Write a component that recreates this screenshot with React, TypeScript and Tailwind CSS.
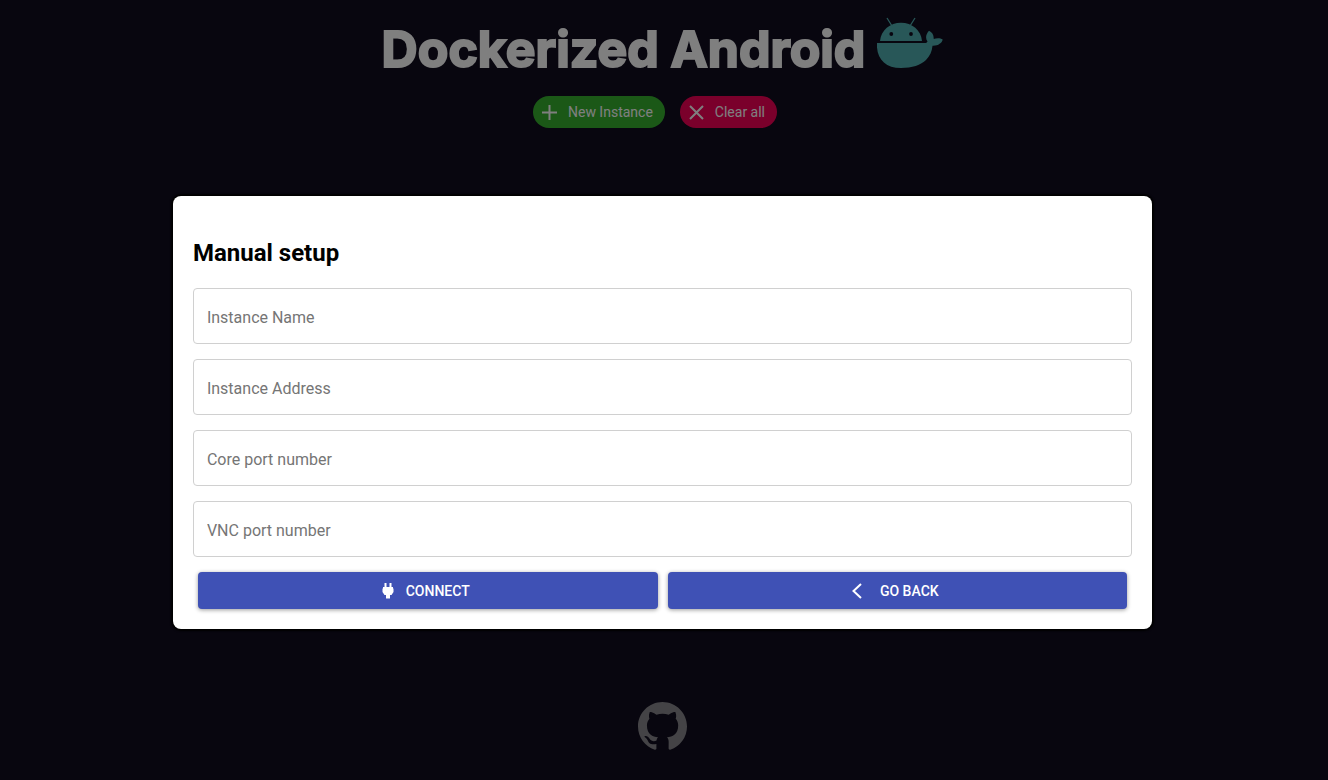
import { useState } from "react";

const fields = ["Instance Name", "Instance Address", "Core port number", "VNC port number"];

function Whale() {
  return (
    <svg viewBox="0 0 66 51" className="h-[51px] w-[66px]" fill="#50aeb0" aria-hidden="true">
      <path d="M3 24C4 13 13 5.700 24 5.700S44 13 45 24z" />
      <path d="M10 1l5 8M38 1l-5 8" stroke="#50aeb0" strokeWidth="1.300" />
      <circle cx="14.300" cy="17" r="1.900" fill="#100b1f" />
      <circle cx="34" cy="17" r="1.900" fill="#100b1f" />
      <path d="M0 26H47.500C49 26 50 25.500 50.500 24.500 48 21 49 17 52 13.700 55 15 57 18 56.700 22 59 21 63 20.500 65.700 22.500 65 26 61 29 55.500 28.700 55 34 53 39 49 43 44 48 35 51 24 51 8 51-1 41 0 26z" />
    </svg>
  );
}

export default function App() {
  const [values, setValues] = useState<Record<string, string>>({});
  return (
    <div className="relative flex min-h-screen flex-col bg-[#100c1e] pr-[3px] font-[Roboto,sans-serif]">
      <header className="flex flex-col items-center">
        <h1 className="flex items-start gap-3 pt-[17px] font-[Inter,sans-serif] text-[50px] leading-[65px] font-bold text-white">
          <span className="[-webkit-text-stroke:2px_white]">Dockerized Android</span>
          <Whale />
        </h1>
        <div className="mt-[14px] flex gap-[15px] pr-[15px] text-sm text-white">
          <button className="flex h-8 items-center rounded-full bg-[#36b12f] pr-3 pl-[9px]">
            <svg viewBox="0 0 15 15" className="mr-[11px] size-[15px]" stroke="white" strokeWidth="2" aria-hidden="true">
              <path d="M7.500 0v15M0 7.500h15" />
            </svg>
            New Instance
          </button>
          <button className="flex h-8 items-center rounded-full bg-[#f50057] pr-3 pl-[9px]">
            <svg viewBox="0 0 15 15" className="mr-[11px] size-[15px]" stroke="white" strokeWidth="2" aria-hidden="true">
              <path d="M1 1l13 13M14 1L1 14" />
            </svg>
            Clear all
          </button>
        </div>
      </header>
      <footer className="mt-auto flex justify-center pb-[29px]">
        <a href="#github" aria-label="GitHub">
          <svg viewBox="0 0 16 16" className="size-[49px]" fill="#88868c" aria-hidden="true">
            <path d="M8 0C3.580 0 0 3.580 0 8c0 3.540 2.290 6.530 5.470 7.590.4.070.55-.17.55-.38 0-.19-.01-.82-.01-1.490-2.010.37-2.530-.49-2.690-.94-.09-.23-.48-.94-.82-1.130-.28-.15-.68-.52-.01-.53.63-.01 1.080.58 1.230.82.72 1.210 1.870.87 2.330.66.070-.52.28-.87.51-1.070-1.780-.2-3.640-.89-3.640-3.950 0-.87.31-1.590.82-2.150-.08-.2-.36-1.020.08-2.120 0 0 .67-.21 2.200.82.64-.18 1.320-.27 2-.27s1.360.09 2 .27c1.530-1.040 2.200-.82 2.200-.82.44 1.100.16 1.920.08 2.120.51.56.82 1.270.82 2.150 0 3.070-1.870 3.750-3.650 3.950.29.25.54.73.54 1.480 0 1.070-.01 1.930-.01 2.200 0 .21.15.46.55.38A8.010 8.010 0 0 0 16 8c0-4.420-3.580-8-8-8z" />
          </svg>
        </a>
      </footer>
      <div className="absolute inset-0 flex items-start justify-center bg-black/50 pt-[196px] pr-[3px]">
        <section
          role="dialog"
          aria-labelledby="setup-title"
          className="w-[73.900%] rounded-lg bg-white px-5 pt-[39px] pb-5 text-black shadow-[0_0_2px_2px_black]"
        >
          <h2 id="setup-title" className="text-2xl leading-9 font-bold">Manual setup</h2>
          <form className="mt-[17px]" onSubmit={(e) => e.preventDefault()}>
            <div className="flex flex-col gap-[15px]">
              {fields.map((name) => (
                <input
                  key={name}
                  aria-label={name}
                  placeholder={name}
                  value={values[name] ?? ""}
                  onChange={(e) => setValues({ ...values, [name]: e.target.value })}
                  className="h-14 w-full rounded border border-[#d0d0d0] px-[13px] pt-[2px] text-base placeholder:text-[#757575]"
                />
              ))}
            </div>
            <div className="mt-[15px] flex gap-[10px] px-[5px] text-sm font-medium text-white">
              <button className="flex h-[37px] flex-1 items-center justify-center rounded bg-[#3f51b5] pr-1 shadow-[0_1px_4px_rgba(0,0,0,0.4)]">
                <svg viewBox="0 0 12 16" className="mr-3 h-4 w-3" fill="white" aria-hidden="true">
                  <path d="M2.500 0h2v4h3V0h2v4H11v1.500h.5V9L9.500 12H8v3.500H4V12H2.500L.5 9V5.500H1V4h1.500z" />
                </svg>
                CONNECT
              </button>
              <button className="flex h-[37px] flex-1 items-center justify-center rounded bg-[#3f51b5] pr-1 shadow-[0_1px_4px_rgba(0,0,0,0.4)]">
                <svg viewBox="0 0 10 16" className="mr-[18px] h-4 w-[10px]" fill="none" stroke="white" strokeWidth="2" aria-hidden="true">
                  <path d="M9 1L1.500 8 9 15" />
                </svg>
                GO BACK
              </button>
            </div>
          </form>
        </section>
      </div>
    </div>
  );
}
